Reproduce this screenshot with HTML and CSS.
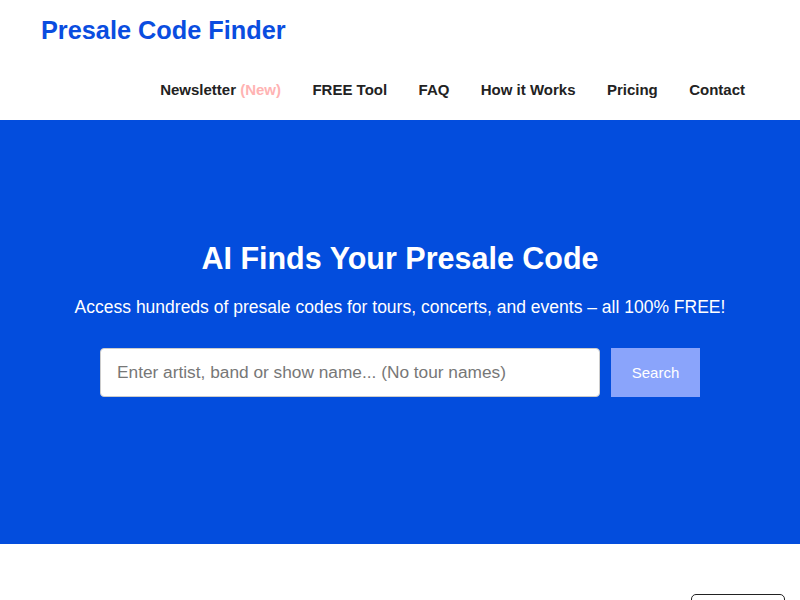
FILE: index.html
```html
<!DOCTYPE html>
<html lang="en">
<head>
<meta charset="utf-8">
<title>Presale Code Finder</title>
<link rel="stylesheet" href="styles.css">
</head>
<body>
<header class="site-header">
  <a class="brand" href="#">Presale Code Finder</a>
  <nav class="main-nav">
    <a href="#">Newsletter <span class="new">(New)</span></a>
    <a href="#">FREE Tool</a>
    <a href="#">FAQ</a>
    <a href="#">How it Works</a>
    <a href="#">Pricing</a>
    <a href="#">Contact</a>
  </nav>
</header>
<section class="hero">
  <h1>AI Finds Your Presale Code</h1>
  <p class="lead">Access hundreds of presale codes for tours, concerts, and events – all 100% FREE!</p>
  <form class="search">
    <input type="text" placeholder="Enter artist, band or show name... (No tour names)">
    <button type="button">Search</button>
  </form>
</section>
<section class="below">
  <div class="below-btn"></div>
</section>
</body>
</html>
```
FILE: styles.css
```css
* { box-sizing: border-box; }
html, body { margin: 0; padding: 0; }
body {
  font-family: "Liberation Sans", Arial, sans-serif;
  background: #fff;
  color: #222;
}
.site-header {
  height: 120px;
  padding: 15px 55px 0 41px;
  display: flex;
  flex-direction: column;
}
.brand {
  font-size: 25.3px;
  font-weight: bold;
  color: #0a4de0;
  text-decoration: none;
  line-height: 30px;
}
.main-nav {
  margin-top: 35px;
  display: flex;
  justify-content: flex-end;
  gap: 31.4px;
}
.main-nav a {
  font-size: 15px;
  font-weight: bold;
  color: #222;
  text-decoration: none;
  line-height: 20px;
}
.main-nav .new { color: #ffb3b3; }
.hero {
  background: #034ddd;
  height: 424px;
  color: #fff;
  display: flex;
  flex-direction: column;
  align-items: center;
  padding-top: 120px;
}
.hero h1 {
  margin: 0;
  font-size: 30.5px;
  line-height: 36px;
  font-weight: bold;
}
.lead {
  margin: 20px 0 0;
  font-size: 17.5px;
  line-height: 22px;
}
.search {
  margin-top: 30px;
  display: flex;
  gap: 11px;
}
.search input {
  width: 500px;
  height: 49px;
  border: 1px solid #ccc;
  border-radius: 4px;
  padding: 0 16px;
  font-family: "Liberation Sans", Arial, sans-serif;
  font-size: 17.3px;
  color: #333;
}
.search input::placeholder { color: #777; }
.search button {
  width: 89px;
  height: 49px;
  border: none;
  background: #8aa4fb;
  color: #fff;
  font-family: "Liberation Sans", Arial, sans-serif;
  font-size: 15px;
}
.below {
  height: 56px;
  display: flex;
  justify-content: flex-end;
  padding: 50px 15px 0 0;
}
.below-btn {
  width: 94px;
  height: 40px;
  border: 1px solid #222;
  border-radius: 5px;
}
```
